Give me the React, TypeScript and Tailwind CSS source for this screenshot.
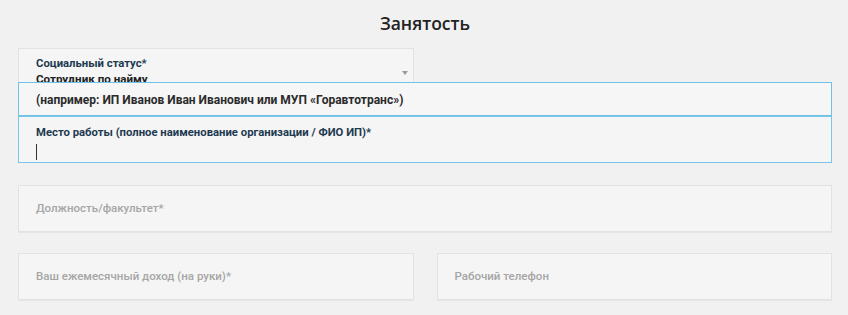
import React from 'react'

// Employment block of the application form
const font = { fontFamily: 'Roboto, "Noto Sans", Arial, sans-serif' }

function Field({ placeholder }: { placeholder: string }) {
  return (
    <div className="flex h-[47px] items-center border border-[#e2e2e2] bg-[#f5f5f5] pl-[17px] shadow-[0_1px_0_#e6e6e6]">
      <span className="text-[11.5px] font-medium text-[#a6a6a6]">{placeholder}</span>
    </div>
  )
}

export default function App() {
  return (
    <div className="h-[315px] w-full bg-[#f1f1f1] pl-[18px] pr-[16px]" style={font}>
      <h2
        className="pt-[11px] text-center text-[17.5px] font-semibold leading-[24px] text-[#222]"
        style={{ fontFamily: '"Open Sans", "Noto Sans", sans-serif' }}
      >
        Занятость
      </h2>

      {/* Social status select */}
      <div className="mt-[13px] grid grid-cols-2 gap-[23px]">
        <div className="relative h-[52px] border border-[#e2e2e2] bg-[#f5f5f5] pl-[17px] pt-[8px]">
          <div className="text-[11.3px] font-bold leading-[14px] text-[#1d3a50]">Социальный статус*</div>
          <div className="text-[11.6px] font-bold leading-[16px] text-[#222]">Сотрудник по найму</div>
          <span className="absolute right-[5px] top-[22px] h-0 w-0 border-x-[3px] border-t-[4px] border-x-transparent border-t-[#9a9a9a]" />
        </div>
        <div />
      </div>

      {/* Place of work, focused with hint */}
      <div className="relative mt-[16px]">
        <div className="absolute bottom-full left-0 right-0 flex h-[34px] items-center border border-[#6ec3e6] bg-[#f6f6f6] pl-[17px] pt-[1px]">
          <span className="text-[12px] font-bold text-[#2b2b2b]">
            (например: ИП Иванов Иван Иванович или МУП «Горавтотранс»)
          </span>
        </div>
        <div className="h-[47px] border border-[#79c6e8] bg-[#f5f5f5] pl-[17px] pt-[9px]">
          <div className="text-[11.3px] font-bold leading-[14px] text-[#1d3a50]">
            Место работы (полное наименование организации / ФИО ИП)*
          </div>
          <div className="mt-[4px] h-[16px] w-px bg-[#333]" />
        </div>
      </div>

      <div className="mt-[22px]">
        <Field placeholder="Должность/факультет*" />
      </div>

      <div className="mt-[21px] grid grid-cols-2 gap-[23px]">
        <Field placeholder="Ваш ежемесячный доход (на руки)*" />
        <Field placeholder="Рабочий телефон" />
      </div>
    </div>
  )
}
